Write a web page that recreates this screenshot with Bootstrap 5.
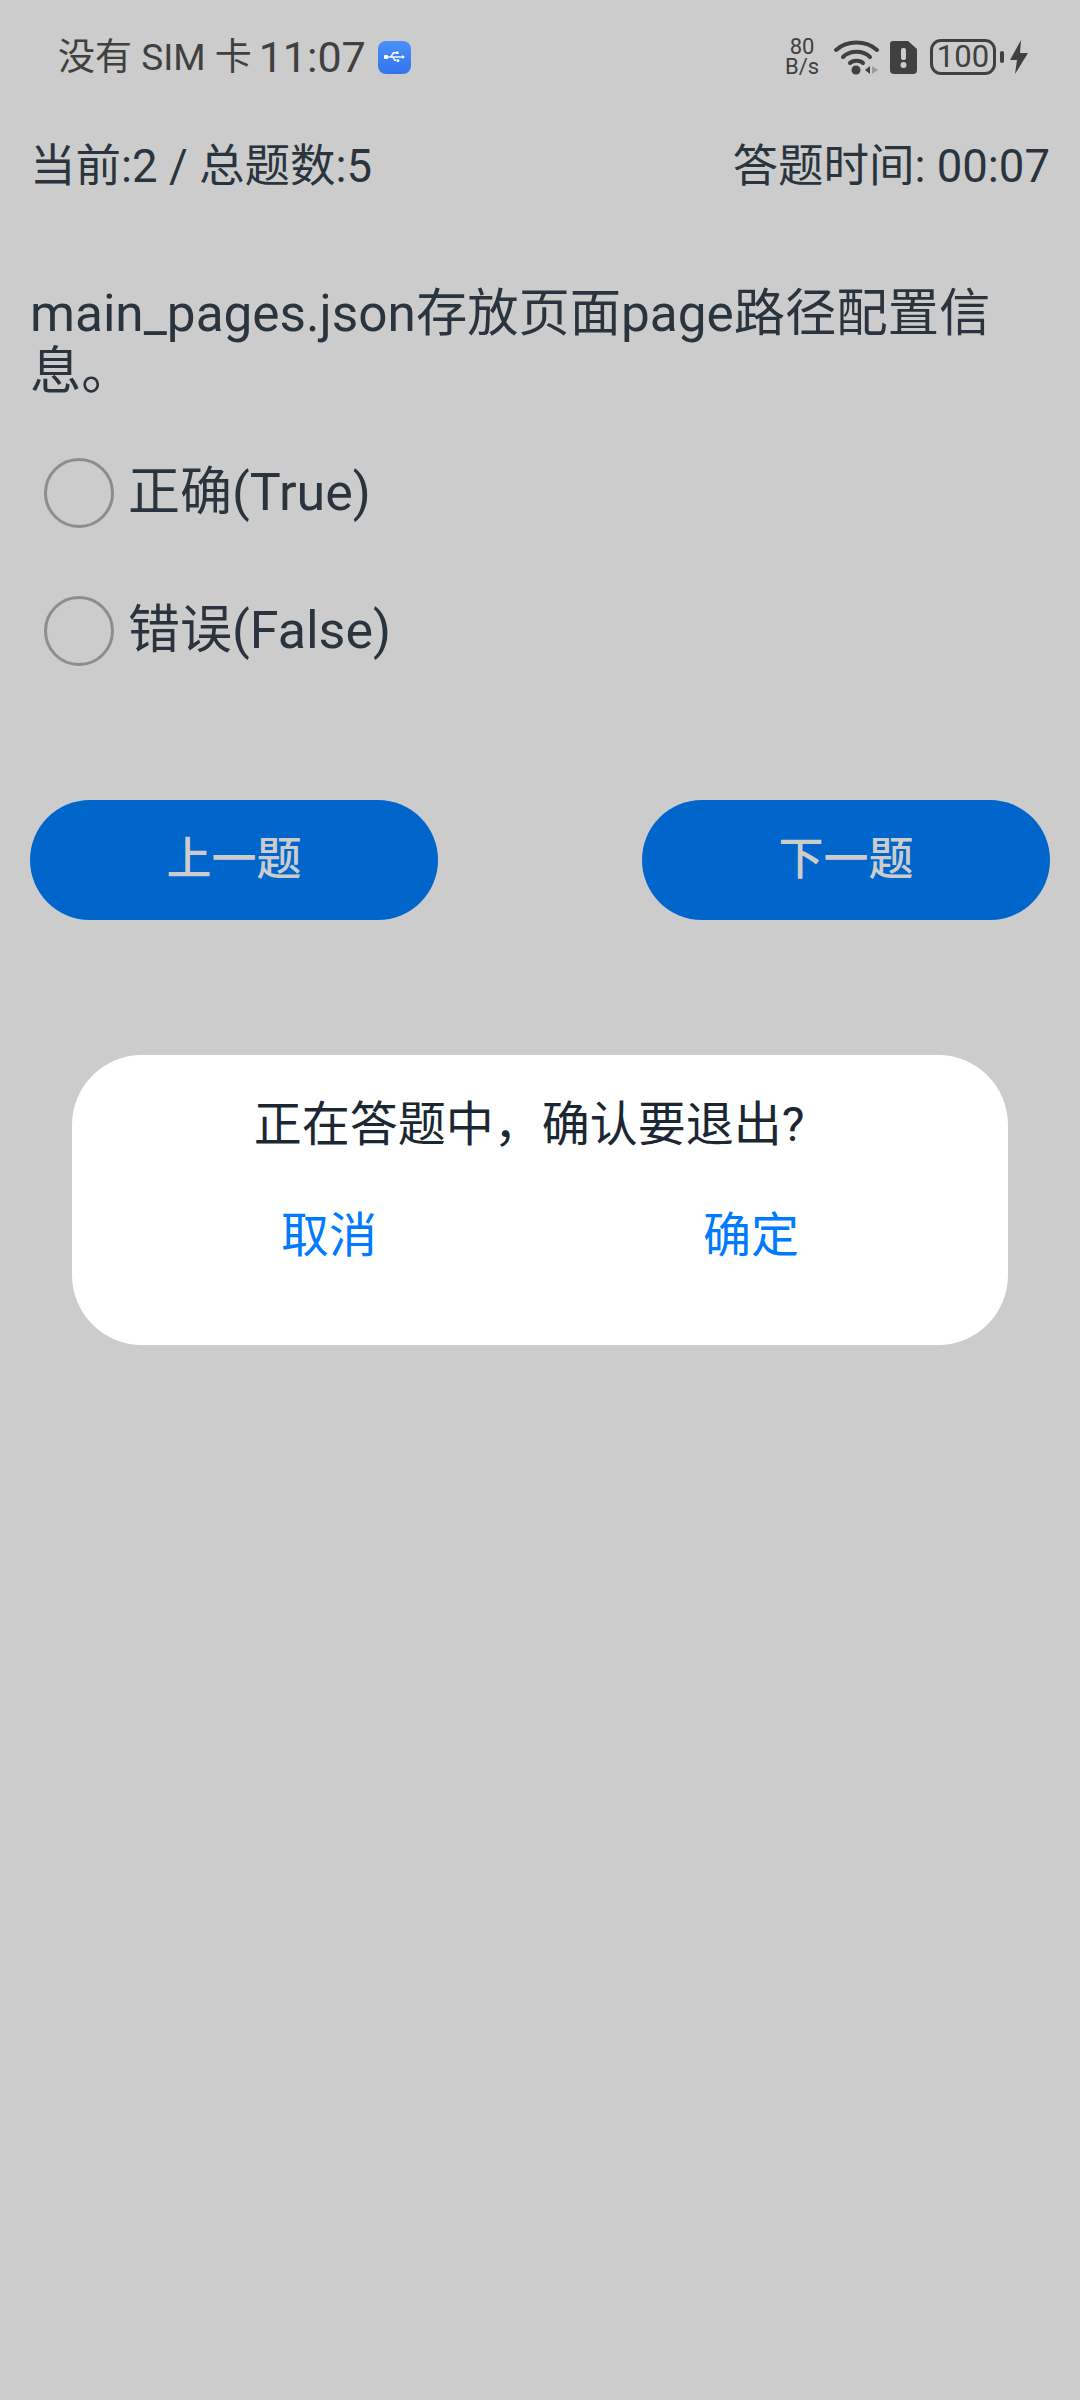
<!DOCTYPE html>
<html lang="zh">
<head>
    <meta charset="utf-8">
    <title>答题</title>
    <link rel="stylesheet" href="https://cdn.jsdelivr.net/npm/bootstrap@5.3.0/dist/css/bootstrap.min.css">
    <style>
        body { background: #ccc; color: #2a343e; font-family: Roboto, "Noto Sans CJK SC", sans-serif; width: 1080px; height: 2400px; overflow: hidden; }
        .status-bar { height: 114px; padding: 0 52px 0 58px; color: #404040; }
        .sb-carrier { font-size: 37px; line-height: 1; }
        .sb-time { font-size: 43px; line-height: 1; margin-left: 7px; }
        .sb-usb { width: 33px; height: 33px; margin-left: 12px; border-radius: 8px; background: linear-gradient(#4a90f5, #3573ee); }
        .sb-speed { font-size: 22px; line-height: 20px; text-align: center; width: 36px; }
        .sb-batt { width: 66px; height: 36px; margin-left: 13px; border: 3px solid #404040; border-radius: 11px; font-size: 31px; line-height: 30px; text-align: center; }
        .sb-wifi { margin-left: 14px; }
        .sb-sim { margin-left: 10px; }
        .top-info { height: 60px; padding: 0 30px; font-size: 45.500px; line-height: 60px; margin-top: 23px; }
        .question { margin: 88px 30px 0; font-size: 51.300px; line-height: 58px; }
        .opt-list { margin-top: 23px; }
        .opt-row { height: 138px; padding-left: 44px; font-size: 52px; }
        .opt-circle { width: 70px; height: 70px; border: 3px solid #8a8d91; border-radius: 50%; margin-right: 14px; }
        .nav-btns { padding: 0 30px; margin-top: 100px; }
        .nav-btn { width: 408px; height: 120px; border: 0; border-radius: 60px; background: #0066cc; color: #ccc; font-size: 45px; font-weight: 500; }
        .confirm-box { position: absolute; left: 72px; top: 1055px; width: 936px; height: 290px; background: #fff; border-radius: 70px; color: #1b2733; }
        .confirm-msg { font-size: 48px; line-height: 60px; padding: 40px 22px 0 0; text-align: center; }
        .confirm-act { font-size: 48px; color: #007bff; line-height: 60px; margin-top: 51px; padding: 0 46px; }
        .confirm-act span { width: 50%; text-align: center; }
    </style>
    <script src="https://cdn.jsdelivr.net/npm/bootstrap@5.3.0/dist/js/bootstrap.bundle.min.js"></script>
</head>
<body>
<div class="status-bar d-flex align-items-center justify-content-between">
    <div class="d-flex align-items-center">
        <span class="sb-carrier">没有 SIM 卡</span>
        <span class="sb-time">11:07</span>
        <span class="sb-usb d-flex align-items-center justify-content-center">
            <svg width="21" height="12" viewBox="0 0 21 12" fill="#fff">
                <rect x="2" y="5.300" width="18" height="1.400"/><rect x="0" y="4" width="4" height="4" rx="1"/>
                <path d="M21 6l-3-2v4zM6 6l3-5h3v1.400H10L7.500 6zM8 6l2.500 4h2V8.600h-1.300L9.500 6z"/>
                <rect x="12" y="0.500" width="2.500" height="2.500"/><circle cx="14" cy="9.500" r="1.500"/>
            </svg>
        </span>
    </div>
    <div class="d-flex align-items-center">
        <span class="sb-speed">80<br>B/s</span>
        <svg class="sb-wifi" width="46" height="36" viewBox="0 0 46 36">
            <g fill="none" stroke="#404040" stroke-width="4" stroke-linecap="round">
                <path d="M2 11C13 1 32 1 43 11"/><path d="M9 18C16 11 29 11 36 18"/><path d="M16 24C19 21 26 21 29 24"/>
            </g>
            <circle cx="22" cy="31" r="4.500" fill="#404040"/>
            <path d="M36 27v8l-5-4z" fill="#404040"/><path d="M38 27v8l6-4z" fill="#9a9a9a"/>
        </svg>
        <svg class="sb-sim" width="27" height="33" viewBox="0 0 27 33">
            <path d="M3 0H18L27 8V29Q27 33 23 33H4Q0 33 0 29V3Q0 0 3 0Z" fill="#404040"/>
            <rect x="11" y="7" width="5" height="12" rx="2" fill="#ccc"/><circle cx="13.500" cy="24" r="3" fill="#ccc"/>
        </svg>
        <span class="sb-batt">100</span>
        <svg class="ms-1" width="6" height="12" viewBox="0 0 6 12"><rect width="4" height="12" rx="2" fill="#404040"/></svg>
        <svg class="ms-1" width="18" height="34" viewBox="0 0 18 34"><path d="M11 0L0 20H7L5 34L18 13H10Z" fill="#404040"/></svg>
    </div>
</div>
<div class="top-info d-flex justify-content-between">
    <span>当前:2 / 总题数:5</span>
    <span>答题时间: 00:07</span>
</div>
<div class="question">main_pages.json存放页面page路径配置信息。</div>
<div class="opt-list">
    <div class="opt-row d-flex align-items-center"><span class="opt-circle"></span>正确(True)</div>
    <div class="opt-row d-flex align-items-center"><span class="opt-circle"></span>错误(False)</div>
</div>
<div class="nav-btns d-flex justify-content-between">
    <button class="btn nav-btn">上一题</button>
    <button class="btn nav-btn">下一题</button>
</div>
<div class="confirm-box">
    <div class="confirm-msg">正在答题中，确认要退出?</div>
    <div class="confirm-act d-flex"><span>取消</span><span>确定</span></div>
</div>
</body>
</html>
